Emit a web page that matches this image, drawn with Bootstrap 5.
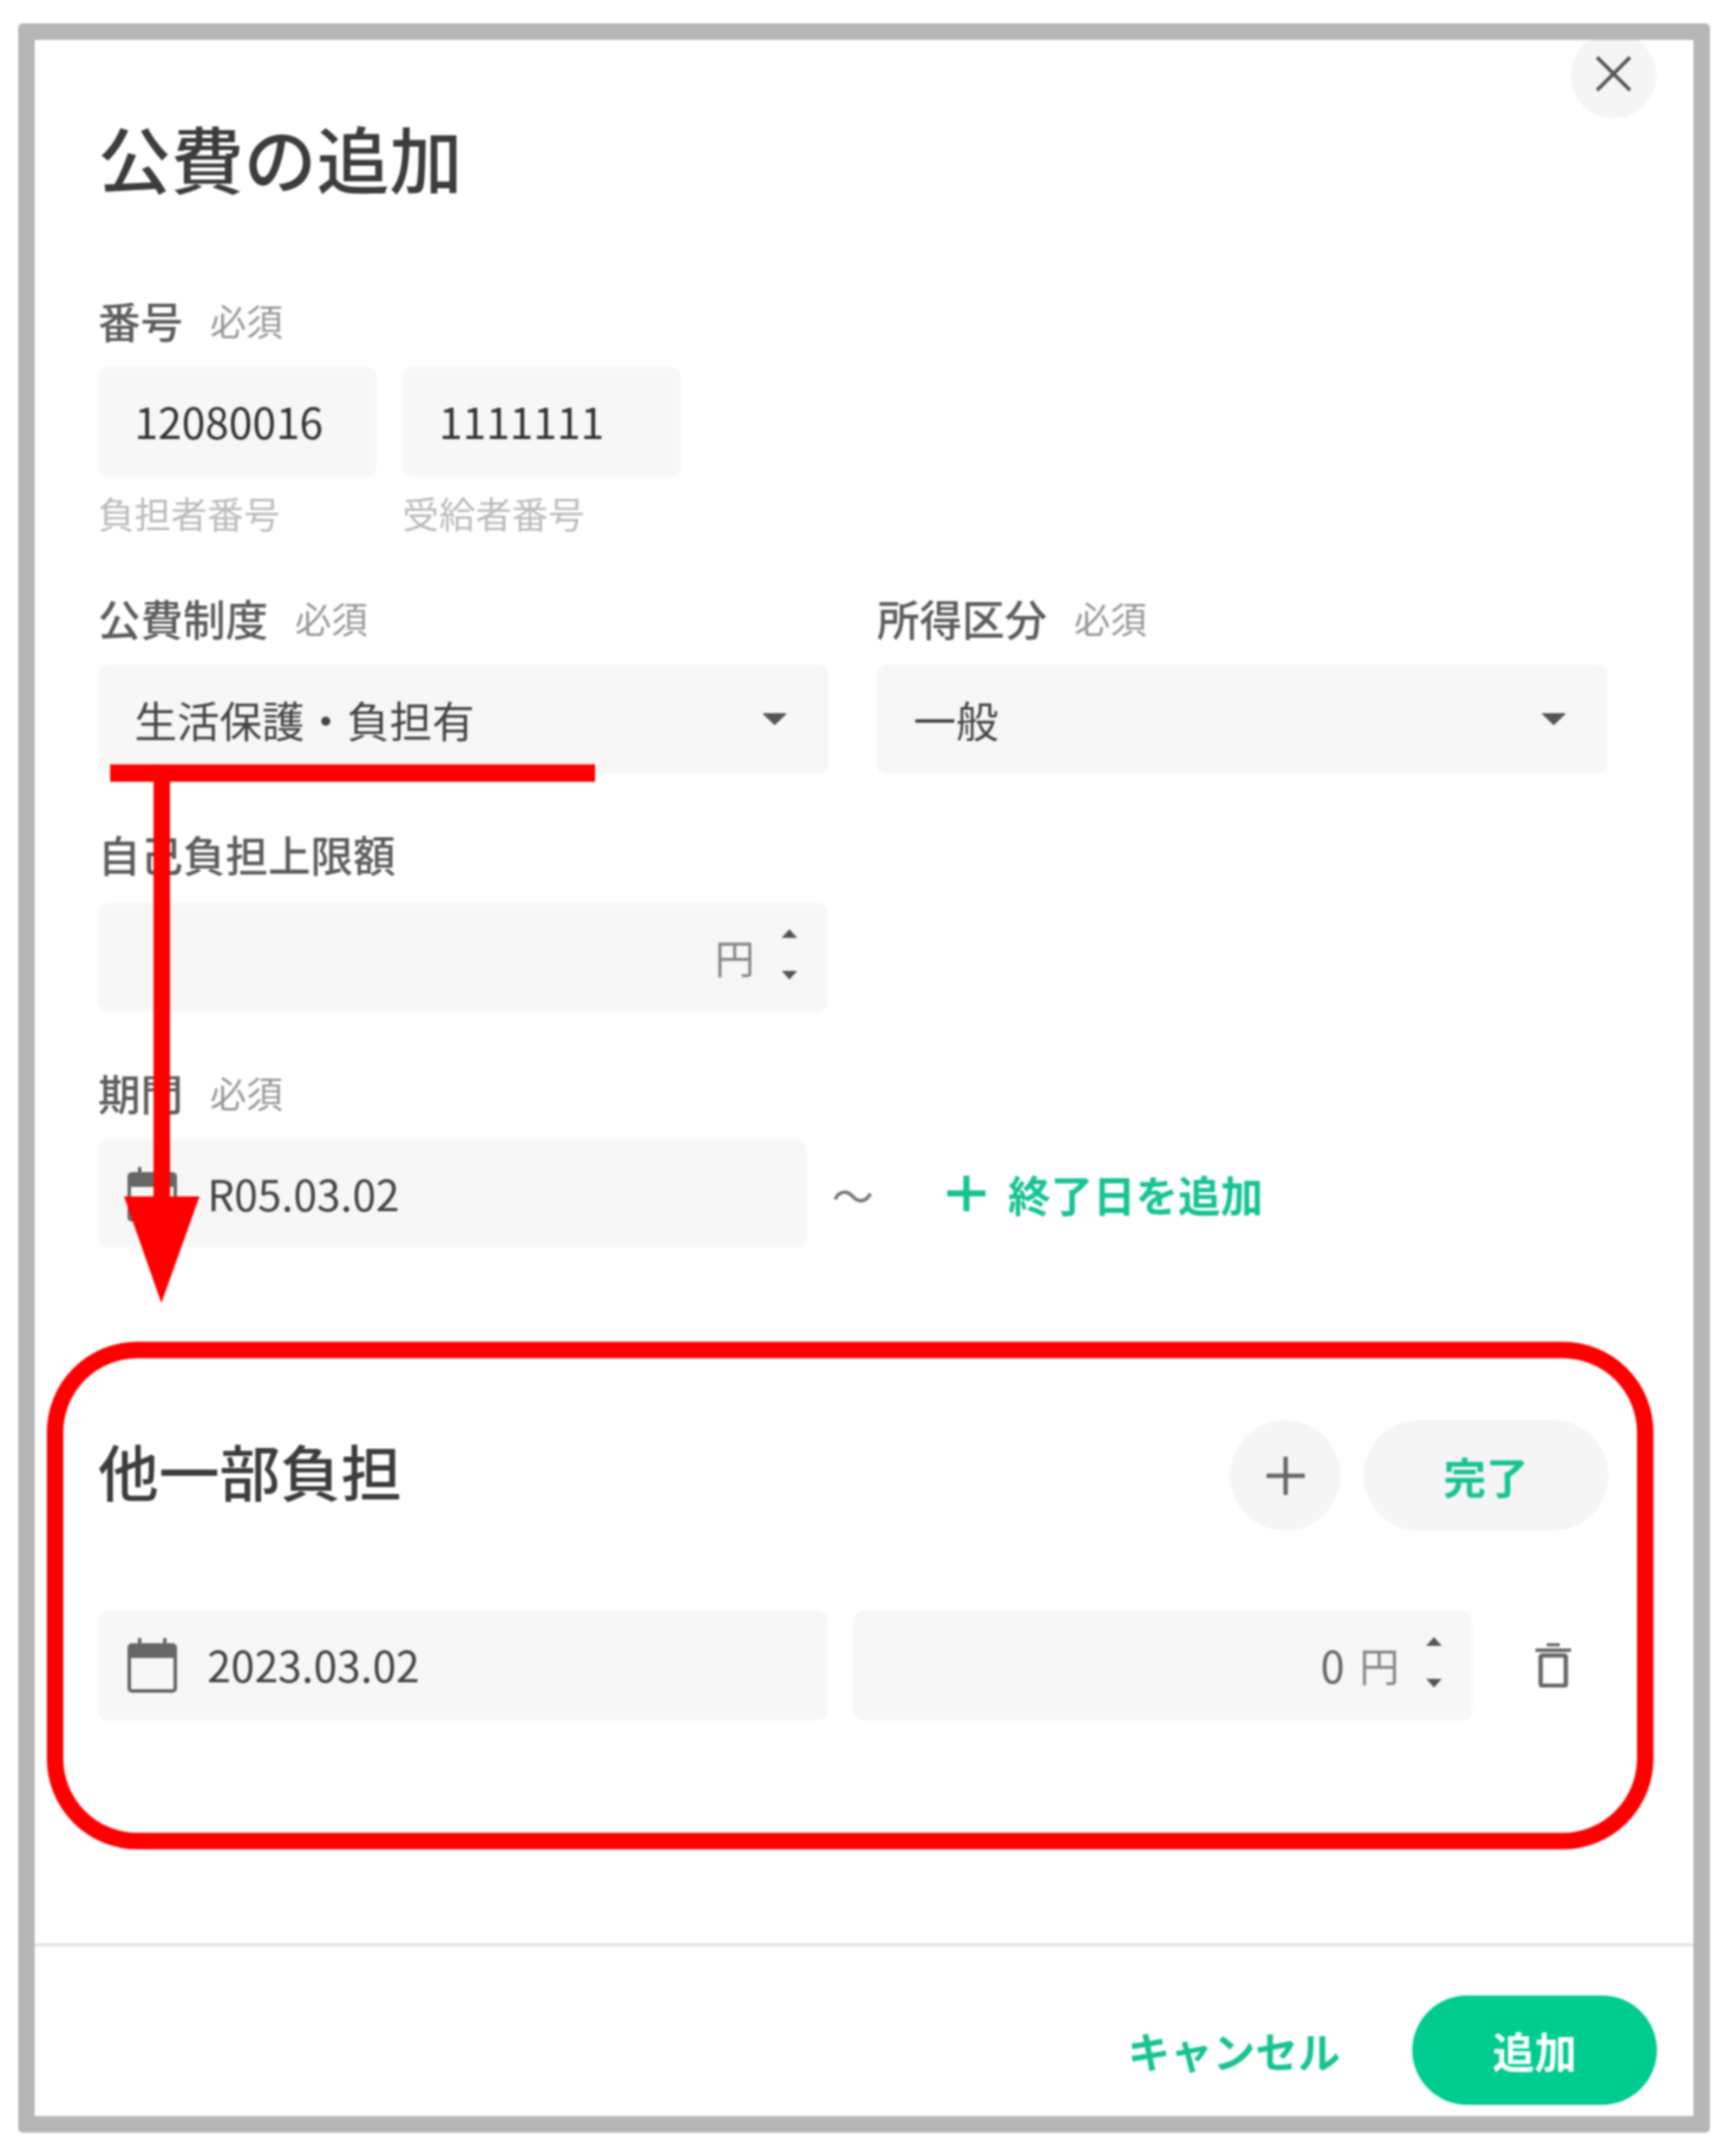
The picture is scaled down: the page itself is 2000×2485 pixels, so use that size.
<!DOCTYPE html>
<html lang="ja">
<head>
  <meta charset="UTF-8" />
  <title>公費の追加</title>
  <link href="https://cdn.jsdelivr.net/npm/bootstrap@5.3.0/dist/css/bootstrap.min.css" rel="stylesheet">
  <style>
    body { width: 2000px; height: 2485px; background: #fff; font-family: "Noto Sans CJK JP", sans-serif; color: #444; overflow: hidden; filter: blur(1.2px); }
    .fee-frame { width: 1950px; height: 2431px; margin: 27px 0 0 21px; border: 19px solid #b6b6b6; border-radius: 5px; background: #fff; overflow: hidden; }
    .fee-close { top: -8px; right: 43px; width: 98px; height: 98px; background: #f5f5f5; border: 0; }
    .fee-close svg { margin-bottom: 4px; }
    .fee-body { padding: 94px 98px 0 73px; }
    .fee-title { font-size: 84px; line-height: 82px; font-weight: 500; color: #3c3c3c; margin: 0 0 123px; }
    .fee-label { font-size: 49px; line-height: 48px; font-weight: 500; color: #5c5c5c; margin-bottom: 30px; }
    .fee-req { font-size: 42px; font-weight: 400; color: #999; margin-left: 31px; }
    .fee-box { height: 125px; background: #f7f7f7; border: 0; border-radius: 12px; font-size: 49px; color: #444; padding: 0 0 3px 42px; box-shadow: none; }
    .fee-code { width: 321px; height: 126px; color: #333; }
    .fee-half { width: 842px; }
    .fee-select { height: 126px; padding-bottom: 0; background-image: url("data:image/svg+xml,%3Csvg xmlns='http://www.w3.org/2000/svg' viewBox='0 0 28 14'%3E%3Cpath fill='%23555' d='M1 0h26q1 0 .4 1L15 13q-1 1-2 0L.6 1Q0 0 1 0z'/%3E%3C/svg%3E"); background-position: right 48px center; background-size: 28px 14px; background-repeat: no-repeat; }
    .fee-pair { gap: 30px; }
    .fee-help { font-size: 42px; line-height: 42px; color: #bbb; margin-top: 21px; }
    .fee-two { gap: 56px; margin-top: 76px; }
    .fee-limit { margin-top: 68px; margin-bottom: 33px; }
    .fee-limit-box { width: 841px; }
    .fee-period { margin-top: 69px; }
    .fee-range { width: 817px; padding-bottom: 1px; }
    .fee-unit { font-size: 46px; color: #888; }
    .fee-num { font-size: 50px; color: #666; margin-right: 17px; }
    .fee-spin { width: 19px; height: 58px; margin: 0 35px 5px 30px; }
    .fee-spin i { display: block; width: 0; height: 0; border-left: 9px solid transparent; border-right: 9px solid transparent; }
    .fee-spin .fee-up { border-bottom: 10px solid #555; }
    .fee-spin .fee-down { border-top: 10px solid #555; }
    .fee-date-icon { width: 57px; height: 65px; margin: 0 35px 0 -8px; }
    .fee-green { color: #17c393; font-weight: 700; font-size: 49px; text-decoration: none; }
    .fee-tilde { font-size: 48px; color: #777; margin: 0 85px 0 29px; line-height: 1; }
    .fee-plus { margin-right: 2px; }
    .fee-subhead { margin-top: 199px; }
    .fee-sub { font-size: 70px; line-height: 113px; padding-bottom: 12px; font-weight: 500; color: #3c3c3c; margin: 0; }
    .fee-round { width: 127px; height: 127px; background: #f5f5f5; border: 0; }
    .fee-done { width: 282px; height: 127px; background: #f5f5f5; border: 0; margin-left: 27px; }
    .fee-sub-row { margin-top: 92px; }
    .fee-tall { height: 127px; }
    .fee-amount { width: 713px; margin-left: 30px; }
    .fee-trash { margin-left: 73px; }
    .fee-footer { height: 199px; border-top: 3px solid #e2e2e2; padding: 44px 42px 0 0; }
    .fee-cancel { margin-right: 83px; }
    .fee-add { width: 282px; height: 126px; background: #00cc90; color: #fff; border: 0; font-size: 48.5px; font-weight: 700; }
    .fee-notes { top: 0; left: 0; pointer-events: none; }
  </style>
</head>
<body>
  <div class="fee-frame position-relative d-flex flex-column">
    <button type="button" class="fee-close position-absolute rounded-circle d-flex align-items-center justify-content-center p-0" aria-label="閉じる">
      <svg width="42" height="42" viewBox="0 0 42 42"><path d="M2 2L40 40M40 2L2 40" fill="none" stroke="#555" stroke-width="4"/></svg>
    </button>

    <div class="fee-body flex-grow-1">
      <h1 class="fee-title">公費の追加</h1>

      <div class="fee-label d-flex align-items-center">番号<span class="fee-req">必須</span></div>
      <div class="d-flex fee-pair">
        <div>
          <input class="form-control fee-box fee-code" value="12080016">
          <div class="fee-help">負担者番号</div>
        </div>
        <div>
          <input class="form-control fee-box fee-code" value="1111111">
          <div class="fee-help">受給者番号</div>
        </div>
      </div>

      <div class="d-flex fee-two">
        <div class="fee-half">
          <div class="fee-label d-flex align-items-center">公費制度<span class="fee-req">必須</span></div>
          <select class="form-select fee-box fee-select"><option>生活保護・負担有</option></select>
        </div>
        <div class="fee-half">
          <div class="fee-label d-flex align-items-center">所得区分<span class="fee-req">必須</span></div>
          <select class="form-select fee-box fee-select"><option>一般</option></select>
        </div>
      </div>

      <div class="fee-label fee-limit">自己負担上限額</div>
      <div class="fee-box fee-limit-box d-flex align-items-center justify-content-end">
        <span class="fee-unit">円</span>
        <div class="fee-spin d-flex flex-column justify-content-between align-items-center"><i class="fee-up"></i><i class="fee-down"></i></div>
      </div>

      <div class="fee-label fee-period d-flex align-items-center">期間<span class="fee-req">必須</span></div>
      <div class="d-flex align-items-center">
        <div class="fee-box fee-range d-flex align-items-center">
          <svg class="fee-date-icon" viewBox="0 0 57 65"><path d="M2 12h53v13H2z" fill="#666"/><rect x="2" y="10" width="53" height="53" rx="3" fill="none" stroke="#666" stroke-width="4"/><path d="M14 2v10M43 2v10" stroke="#666" stroke-width="4"/></svg>
          <span>R05.03.02</span>
        </div>
        <span class="fee-tilde">〜</span>
        <a href="#" class="fee-green d-flex align-items-center gap-4">
          <svg class="fee-plus" width="44" height="41" viewBox="0 0 44 41"><path d="M22 0v41M0 20.5h44" stroke="#17c393" stroke-width="7"/></svg>
          終了日を追加
        </a>
      </div>

      <div class="d-flex align-items-center justify-content-between fee-subhead">
        <h2 class="fee-sub">他一部負担</h2>
        <div class="d-flex">
          <button type="button" class="fee-round rounded-circle d-flex align-items-center justify-content-center p-0" aria-label="追加">
            <svg width="44" height="44" viewBox="0 0 44 44"><path d="M22 0v44M0 22h44" stroke="#666" stroke-width="5"/></svg>
          </button>
          <button type="button" class="fee-done rounded-pill fee-green p-0">完了</button>
        </div>
      </div>

      <div class="d-flex align-items-center fee-sub-row">
        <div class="fee-box fee-limit-box d-flex align-items-center fee-tall">
          <svg class="fee-date-icon" viewBox="0 0 57 65"><path d="M2 12h53v13H2z" fill="#666"/><rect x="2" y="10" width="53" height="53" rx="3" fill="none" stroke="#666" stroke-width="4"/><path d="M14 2v10M43 2v10" stroke="#666" stroke-width="4"/></svg>
          <span>2023.03.02</span>
        </div>
        <div class="fee-box fee-amount d-flex align-items-center justify-content-end fee-tall">
          <span class="fee-num">0</span><span class="fee-unit">円</span>
          <div class="fee-spin d-flex flex-column justify-content-between align-items-center"><i class="fee-up"></i><i class="fee-down"></i></div>
        </div>
        <svg class="fee-trash" width="41" height="51" viewBox="0 0 41 51" aria-label="削除"><path d="M13 1.5h15M0 8h41" stroke="#666" stroke-width="4"/><rect x="6" y="14" width="29" height="35" rx="2" fill="none" stroke="#666" stroke-width="5"/></svg>
      </div>
    </div>

    <div class="fee-footer d-flex align-items-center justify-content-end">
      <a href="#" class="fee-green fee-cancel">キャンセル</a>
      <button type="button" class="fee-add rounded-pill p-0">追加</button>
    </div>
  </div>

  <!-- 赤い注釈 -->
  <svg class="fee-notes position-absolute" width="2000" height="2485" viewBox="0 0 2000 2485">
    <path d="M127 881h559v20H127z" fill="#f00"/>
    <path d="M177 900h19v480h-19z" fill="#f00"/>
    <path d="M143 1379h87l-44 123z" fill="#f00"/>
    <rect x="63.5" y="1556" width="1833" height="566" rx="95" ry="95" fill="none" stroke="#f00" stroke-width="19"/>
  </svg>

  <script src="https://cdn.jsdelivr.net/npm/bootstrap@5.3.0/dist/js/bootstrap.bundle.min.js"></script>
</body>
</html>
